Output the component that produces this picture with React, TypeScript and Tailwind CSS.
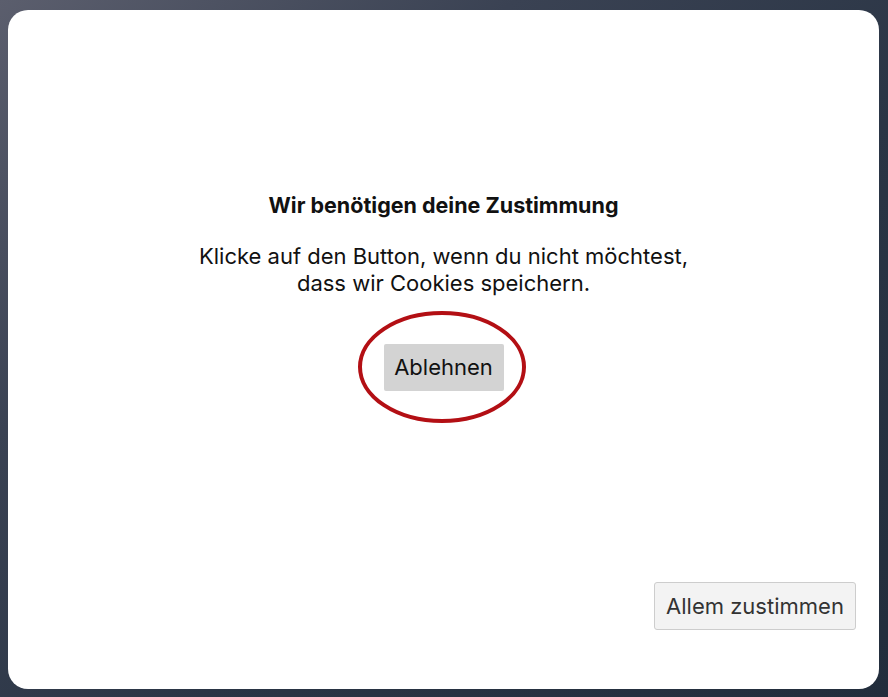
import React from "react";

export default function App() {
  return (
    <div className="w-[888px] h-[697px] bg-[linear-gradient(140deg,#5b5e6d_0%,#3a4253_30%,#2a3545_60%,#222d3c_100%)] pt-[10px] pl-[8px]">
      <div
        className="w-[871px] h-[679px] bg-white rounded-[20px] flex flex-col items-center pt-[181px] text-[#111]"
        style={{ fontFamily: 'Inter, "Open Sans", sans-serif' }}
      >
        <h1 className="text-[21.5px] leading-[28px] font-bold">Wir benötigen deine Zustimmung</h1>
        <div className="mt-[24px] flex flex-col items-center text-[22px] leading-[27px]">
          <p>Klicke auf den Button, wenn du nicht möchtest,</p>
          <p>dass wir Cookies speichern.</p>
        </div>
        <div className="relative mt-[47px]">
          <button className="w-[120px] h-[47px] bg-[#d3d3d3] text-[22px] text-[#111] rounded-[2px]">
            Ablehnen
          </button>
          <svg
            className="absolute left-[-26px] top-[-33px] pointer-events-none"
            width="168"
            height="112"
            viewBox="0 0 168 112"
          >
            <ellipse cx="84" cy="56" rx="82" ry="54" fill="none" stroke="#b30f14" strokeWidth="4" />
          </svg>
        </div>
        <div className="flex-1" />
        <div className="w-full flex justify-end pr-[23px] pb-[59px]">
          <button className="w-[202px] h-[48px] bg-[#f3f3f3] border border-[#cdcdcd] rounded-[3px] text-[22px] text-[#333]">
            Allem zustimmen
          </button>
        </div>
      </div>
    </div>
  );
}
